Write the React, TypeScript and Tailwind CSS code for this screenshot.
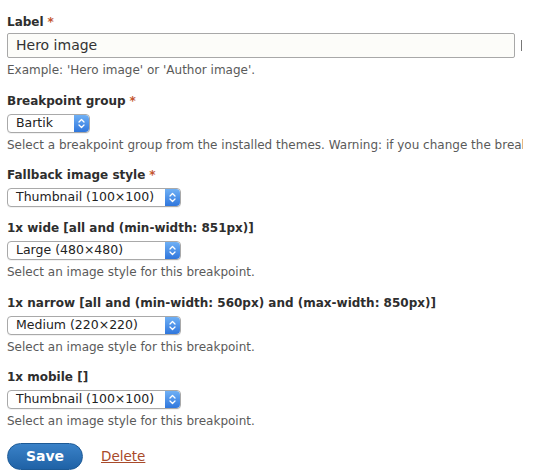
const font = { fontFamily: '"DejaVu Sans", "Liberation Sans", sans-serif' };

const Chevrons = () => (
  <span className="flex h-full w-[15px] items-center justify-center rounded-r-[4px] bg-gradient-to-b from-[#6fb0f5] to-[#2f76dc]">
    <svg width="7" height="11" viewBox="0 0 7 11" fill="none" stroke="white" strokeWidth="1.3" strokeLinecap="round" strokeLinejoin="round">
      <path d="M1 4 L3.5 1.5 L6 4" />
      <path d="M1 7 L3.5 9.5 L6 7" />
    </svg>
  </span>
);

const Select = ({ value, width }: { value: string; width: string }) => (
  <div className={`mt-[5px] flex h-[19px] items-stretch rounded-[4px] border border-[#a9a9a9] bg-white shadow-[0_1px_0_rgba(0,0,0,0.05)] ${width}`}>
    <span className="flex flex-1 items-center pl-[8px] text-[12.5px] leading-none text-[#222]">{value}</span>
    <Chevrons />
  </div>
);

const Label = ({ text, required }: { text: string; required?: boolean }) => (
  <div className="text-[12px] font-bold leading-[16px] text-[#2e2e2e]">
    {text}
    {required && <span className="ml-[4px] text-[#c4552f]">*</span>}
  </div>
);

const Desc = ({ text }: { text: string }) => (
  <div className="mt-[5px] whitespace-nowrap text-[12px] leading-[15px] text-[#5a5a5a]">{text}</div>
);

const App = () => {
  return (
    <div className="h-[472px] w-[537px] overflow-hidden bg-white" style={font}>
      <div className="w-[523px] overflow-hidden pl-[7px] pt-[14px]">
        <Label text="Label" required />
        <div className="mt-[3px] flex items-center">
          <div className="flex h-[25px] w-[508px] items-center rounded-[2px] border border-[#a8a8a8] bg-[#fcfcf9] pl-[8px] text-[14px] text-[#333]">
            Hero image
          </div>
          <span className="ml-[6px] h-[11px] w-px bg-[#777]" />
        </div>
        <Desc text="Example: 'Hero image' or 'Author image'." />

        <div className="mt-[15px]">
          <Label text="Breakpoint group" required />
          <Select value="Bartik" width="w-[83px]" />
          <Desc text="Select a breakpoint group from the installed themes. Warning: if you change the breakpoint group you lose all your selected mappings." />
        </div>

        <div className="mt-[14px]">
          <Label text="Fallback image style" required />
          <Select value="Thumbnail (100×100)" width="w-[174px]" />
        </div>

        <div className="mt-[13px]">
          <Label text="1x wide [all and (min-width: 851px)]" />
          <Select value="Large (480×480)" width="w-[174px]" />
          <Desc text="Select an image style for this breakpoint." />
        </div>

        <div className="mt-[15px]">
          <Label text="1x narrow [all and (min-width: 560px) and (max-width: 850px)]" />
          <Select value="Medium (220×220)" width="w-[174px]" />
          <Desc text="Select an image style for this breakpoint." />
        </div>

        <div className="mt-[14px]">
          <Label text="1x mobile []" />
          <Select value="Thumbnail (100×100)" width="w-[174px]" />
          <Desc text="Select an image style for this breakpoint." />
        </div>

        <div className="mt-[14px] flex items-center gap-[18px]">
          <button className="h-[27px] w-[76px] rounded-full border border-[#1d5a96] bg-gradient-to-b from-[#3a82c8] to-[#1f62a6] text-[14px] font-bold text-white">
            Save
          </button>
          <a href="#" className="text-[13.5px] text-[#a84a2a] underline">
            Delete
          </a>
        </div>
      </div>
    </div>
  );
};

export default App;
